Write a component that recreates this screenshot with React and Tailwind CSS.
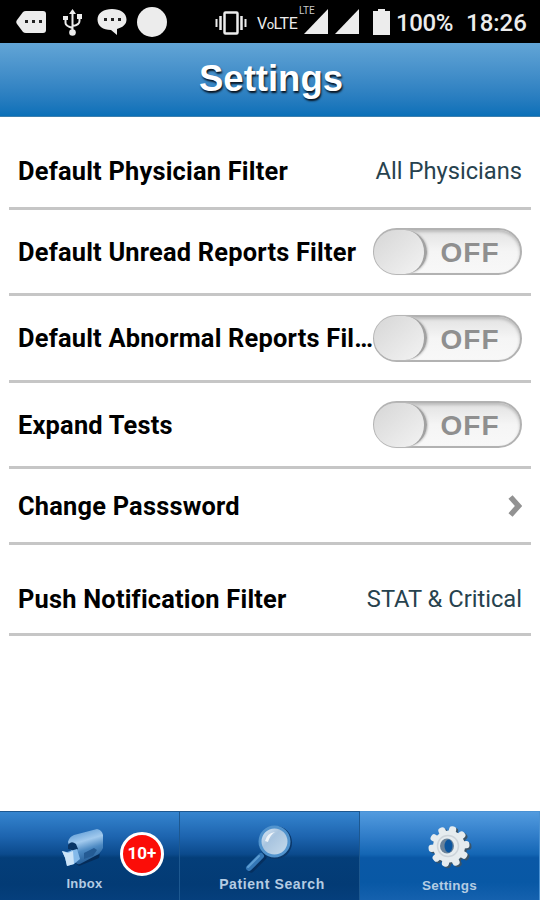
import { useState } from 'react';
import clsx from 'clsx';

const TABS = [
  { id: 'inbox', label: 'Inbox', Icon: InboxIcon, badge: '10+', labelClass: 'pr-[10px] text-[13px] tracking-[0.3px]' },
  { id: 'search', label: 'Patient Search', Icon: SearchIcon, labelClass: 'pl-[5px] text-[14px] tracking-[0.6px]' },
  { id: 'settings', label: 'Settings', Icon: GearIcon, labelClass: 'pt-px text-[13.5px] tracking-[0.2px]' },
];

export default function App() {
  const [toggles, setToggles] = useState({ unread: false, abnormal: false, expand: false });
  const [tab, setTab] = useState('settings');

  const flip = (key) => setToggles((prev) => ({ ...prev, [key]: !prev[key] }));

  return (
    <div className="flex h-[900px] w-[540px] flex-col overflow-hidden bg-white font-['Roboto',sans-serif]">
      <StatusBar />

      <header className="flex h-[74px] shrink-0 items-center justify-center border-b border-[#3c7fae] bg-linear-to-b from-[#62a5d6] to-[#0870b8]">
        <h1 className="pl-[2px] font-['Liberation_Sans',sans-serif] text-[36.5px] leading-none font-bold text-white [text-shadow:1px_2px_2px_#08131f]">
          Settings
        </h1>
      </header>

      <main className="flex flex-1 flex-col px-[9px]">
        <Row label="Default Physician Filter" className="h-[93px] pt-[18px]">
          <Value>All Physicians</Value>
        </Row>
        <Row label="Default Unread Reports Filter" className="h-[86px]">
          <Toggle on={toggles.unread} onChange={() => flip('unread')} />
        </Row>
        <Row label="Default Abnormal Reports Fil…" className="h-[87px]">
          <Toggle on={toggles.abnormal} onChange={() => flip('abnormal')} />
        </Row>
        <Row label="Expand Tests" className="h-[86px]">
          <Toggle on={toggles.expand} onChange={() => flip('expand')} />
        </Row>
        <Row label="Change Passsword" className="h-[76px]">
          <svg className="h-[22px] w-[15px]" viewBox="0 0 15 22" fill="none" stroke="#929292" strokeWidth="5.500">
            <path d="M3.500 2l8 9-8 9" />
          </svg>
        </Row>
        <Row label="Push Notification Filter" className="h-[91px] pt-[19px]">
          <Value>STAT &amp; Critical</Value>
        </Row>
      </main>

      <nav className="flex h-[89px] shrink-0">
        {TABS.map(({ id, label, Icon, badge, labelClass }) => (
          <button
            key={id}
            onClick={() => setTab(id)}
            className={clsx(
              'relative flex flex-1 flex-col items-center border-t border-r pt-[8px]',
              tab === id
                ? 'border-[#4a92d4] bg-[linear-gradient(#529bdf_0%,#2f7cc8_28%,#1466b4_48%,#0a58a6_52%,#0858a5_80%,#1561ae_100%)]'
                : 'border-[#1d5890] bg-[linear-gradient(#3585cf_0%,#1d64af_28%,#0b4a8c_48%,#043e79_52%,#033b75_82%,#053f7c_100%)]'
            )}
          >
            <Icon />
            <span
              className={clsx(
                "font-['Liberation_Sans',sans-serif] leading-[16px] font-bold whitespace-nowrap text-[#b4cce3]",
                labelClass
              )}
            >
              {label}
            </span>
            {badge && (
              <span className="absolute top-[20px] left-[120px] flex size-[44px] items-center justify-center rounded-full border-[3px] border-white bg-[#fb0d08] text-[17px] font-bold text-white">
                {badge}
              </span>
            )}
          </button>
        ))}
      </nav>
    </div>
  );
}

function Row({ label, className, children }) {
  return (
    <div className={clsx('flex shrink-0 items-center border-b-[3px] border-[#c6c6c6] px-[9px]', className)}>
      <span className="min-w-0 flex-1 text-[25.4px] leading-8 font-bold tracking-[0.21px] whitespace-nowrap text-black">
        {label}
      </span>
      {children}
    </div>
  );
}

function Value({ children }) {
  return <span className="text-[23.7px] leading-8 whitespace-nowrap text-[#27424e]">{children}</span>;
}

function Toggle({ on, onChange }) {
  return (
    <button
      role="switch"
      aria-checked={on}
      onClick={onChange}
      className={clsx(
        'flex h-[47px] w-[149px] shrink-0 items-center rounded-full border-2 border-[#b2b2b2] bg-linear-to-b from-[#e2e2e2] via-[#f5f5f5] to-[#f8f8f8] shadow-[inset_0_2px_3px_#bcbcbc]',
        on && 'flex-row-reverse'
      )}
    >
      <span className="-ml-px h-[44px] w-[53px] rounded-full border-r-[3px] border-[#a2a2a2] bg-linear-to-br from-[#d6d6d6] to-[#f3f3f3] shadow-[1px_0_2px_#c6c6c6]" />
      <span className="flex-1 pt-[3px] pr-[7px] text-center font-['Liberation_Sans',sans-serif] text-[28px] leading-none font-bold tracking-[1px] text-[#8f8f8f]">
        {on ? 'ON' : 'OFF'}
      </span>
    </button>
  );
}

function StatusBar() {
  return (
    <div className="flex h-[43px] shrink-0 items-center bg-black text-[#ececec]">
      <svg className="ml-[16px] h-[24px] w-[31px]" viewBox="0 0 31 24">
        <path d="M10 1h17q3 0 3 3v16q0 3-3 3H10q-2 0-3-1L1 14q-1.500-2 0-4L7 2q1-1 3-1z" fill="#ececec" />
        <path d="M9 10h3v3H9zM16 10h3v3h-3zM23 10h3v3h-3z" fill="#222" />
      </svg>
      <svg className="mt-[2px] ml-[16px] h-[27px] w-[19px]" viewBox="0 0 19 27" fill="none" stroke="#ececec" strokeWidth="2">
        <path d="M9.500 3v19M2.500 9v5q0 3 7 5M16.500 7v5q0 4-7 5" />
        <path d="M9.500 0L6 5h7zM0 7h5v4H0zM14 5h5v5h-5z" fill="#ececec" stroke="none" />
        <circle cx="9.500" cy="23.500" r="3.300" fill="#ececec" stroke="none" />
      </svg>
      <svg className="ml-[15px] h-[26px] w-[30px]" viewBox="0 0 30 26">
        <path d="M15 0c8 0 14.500 4 14.500 10.500 0 5-4 8-9.500 9.500V26l-6-5C6 21 .5 17 .5 10.500.5 4 7 0 15 0z" fill="#ececec" />
        <path d="M7 9h3v3H7zM14 9h3v3h-3zM21 9h3v3h-3z" fill="#222" />
      </svg>
      <span className="ml-[10px] size-[30px] rounded-full bg-[#ececec]" />

      <svg className="mt-[2px] ml-[48px] h-[24px] w-[32px]" viewBox="0 0 32 24" fill="none" stroke="#ececec">
        <rect x="9.500" y="1.500" width="13" height="21" rx="1" strokeWidth="2.500" />
        <path d="M5.500 5v14M26.500 5v14" strokeWidth="2.500" />
        <path d="M1.500 8v8M30.500 8v8" strokeWidth="2" />
      </svg>
      <span className="ml-[10px] w-[42px] pt-[4px] text-[16px] leading-none tracking-[-0.5px] whitespace-nowrap">
        V<span className="text-[13px]">o</span>LTE
      </span>
      <div className="relative ml-[5px] h-[25px] w-[24px]">
        <svg className="size-full" viewBox="0 0 24 24" preserveAspectRatio="none">
          <path d="M24 0v24H0z" fill="#ececec" />
        </svg>
        <span className="absolute top-[-3px] left-[-5px] text-[10px] leading-none text-[#c9c9c9]">LTE</span>
      </div>
      <svg className="ml-[7px] h-[25px] w-[24px]" viewBox="0 0 24 24" preserveAspectRatio="none">
        <path d="M24 0v24H0z" fill="#ececec" />
      </svg>
      <svg className="ml-[14px] h-[26px] w-[17px]" viewBox="0 0 17 26">
        <path d="M5 0h7v2h5v24H0V2h5z" fill="#ececec" />
      </svg>
      <span className="ml-[6px] pt-[3px] text-[24px] leading-none font-medium tracking-[-0.4px]">100%</span>
      <span className="ml-[13px] pt-[3px] text-[24px] leading-none font-medium">18:26</span>
    </div>
  );
}

function InboxIcon() {
  return (
    <svg className="mr-[14px] h-[56px] w-[56px] shrink-0" viewBox="0 0 56 56">
      <defs>
        <linearGradient id="tube" x1="0.3" y1="0" x2="0.600" y2="1">
          <stop offset="0" stopColor="#5a99d5" />
          <stop offset="0.350" stopColor="#a2caee" />
          <stop offset="0.600" stopColor="#4c89c2" />
          <stop offset="1" stopColor="#1c5590" />
        </linearGradient>
      </defs>
      <path d="M20 43l25-9 3-14-4 18-20 8z" fill="#052c59" />
      <path d="M13 22q1-5 6-7l23-6q5 1 6 6v13q-2 5-8 8l-15 8q-4 1-6-4z" fill="url(#tube)" />
      <path d="M13 25q3-5 8-1l2 5-3 2-7-2z" fill="#093464" />
      <path d="M7 31l5 1 10-3 3 10-6 5-7 2q-1-8-5-15z" fill="#84baea" />
      <path d="M7 31l6 2 5-2 1 13-7 2q-1-8-5-15z" fill="#cbe4f8" />
      <path d="M29 33l10-5 3 2-4 6-9 3z" fill="#245b94" />
    </svg>
  );
}

function SearchIcon() {
  return (
    <svg className="mr-[3px] h-[56px] w-[56px] shrink-0" viewBox="0 0 56 56">
      <defs>
        <linearGradient id="lens" x1="0" y1="0" x2="1" y2="1">
          <stop offset="0" stopColor="#e5f0fa" />
          <stop offset="0.4" stopColor="#a8c4df" />
          <stop offset="1" stopColor="#c9dded" />
        </linearGradient>
      </defs>
      <path d="M23 37L11 49" stroke="#052f5f" strokeWidth="7" strokeLinecap="round" />
      <path d="M21 36L9 48" stroke="#3477b6" strokeWidth="6" strokeLinecap="round" />
      <path d="M19 36L8 47" stroke="#5c9dd3" strokeWidth="2" strokeLinecap="round" />
      <circle cx="35.500" cy="22.500" r="16.500" fill="#0a3769" />
      <circle cx="34.500" cy="21.500" r="14.500" fill="url(#lens)" stroke="#5193cd" strokeWidth="3" />
      <path d="M25 21q2-8 10-9-5 3-7 10z" fill="#fff" opacity="0.8" />
    </svg>
  );
}

function GearIcon() {
  return (
    <svg className="mr-[4px] h-[57px] w-[56px] shrink-0" viewBox="0 0 56 56">
      <g transform="translate(31 27.500) rotate(12)" fill="#3b5468">
        <GearBody />
      </g>
      <g transform="translate(29 26) rotate(12)" fill="#e6ecef">
        <GearBody />
      </g>
      <circle cx="28" cy="25.500" r="10.500" fill="none" stroke="#cdd4da" strokeWidth="1.500" />
      <ellipse cx="27" cy="25.500" rx="7" ry="7.500" fill="#6a8299" />
      <ellipse cx="28.500" cy="25.500" rx="4" ry="6.500" fill="#0b559e" />
    </svg>
  );
}

function GearBody() {
  return (
    <>
      <circle r="16" />
      {[0, 36, 72, 108, 144, 180, 216, 252, 288, 324].map((deg) => (
        <rect key={deg} x="-3.600" y="-20.500" width="7.200" height="9" rx="3" transform={`rotate(${deg})`} />
      ))}
    </>
  );
}
